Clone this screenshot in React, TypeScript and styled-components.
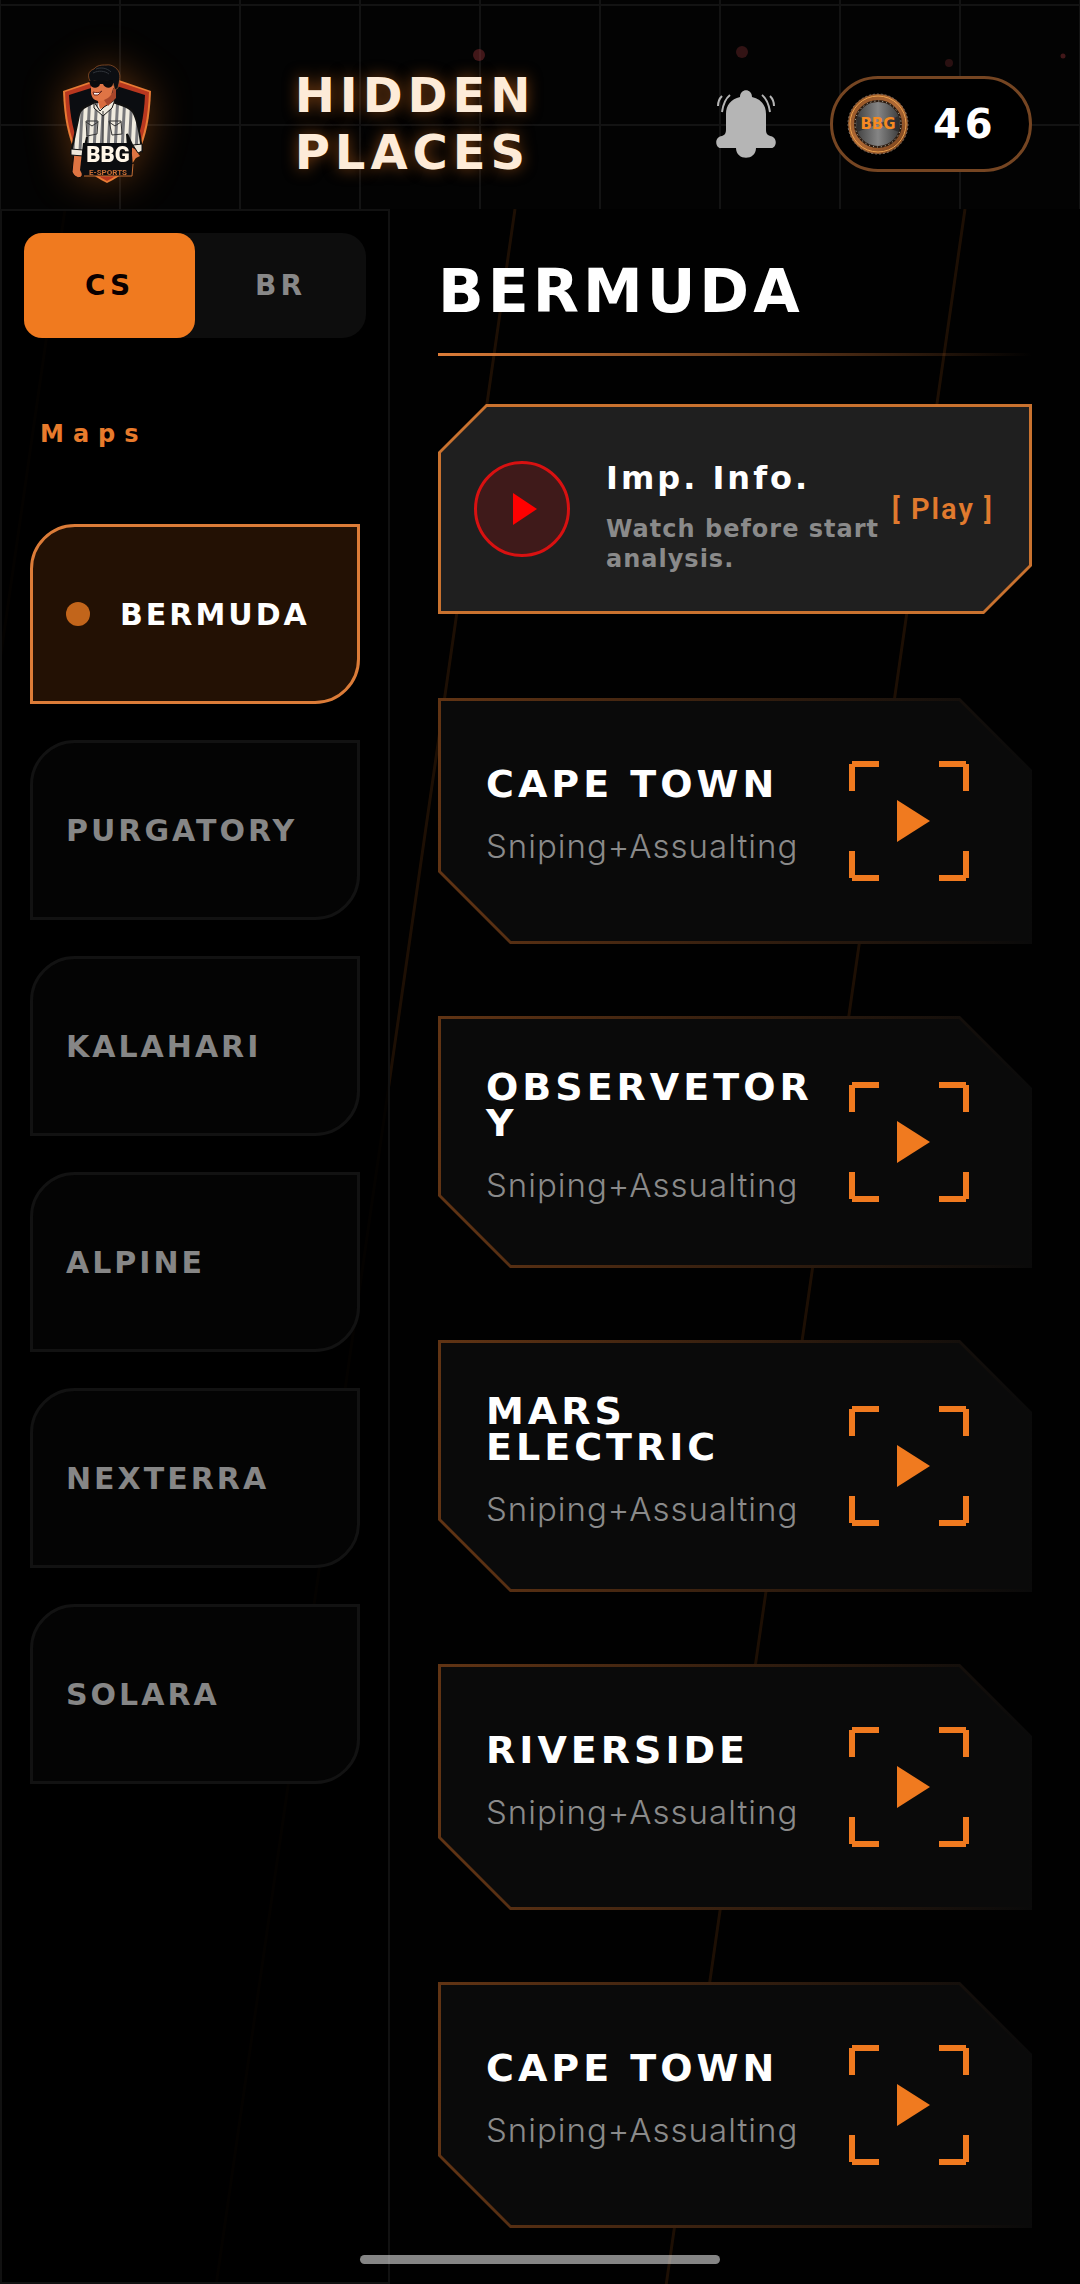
import React, { useState } from "react";
import styled, { createGlobalStyle } from "styled-components";

const display = `"DejaVu Sans", Verdana, sans-serif`;
const orange = "#f07a1f";

const GlobalStyle = createGlobalStyle`
  *, *::before, *::after { box-sizing: border-box; }
  body { margin: 0; background: #010101; color: #fff; font-family: ${display}; font-weight: 700; }
  button { border: 0; padding: 0; margin: 0; background: none; color: inherit; font: inherit; letter-spacing: inherit; text-align: left; cursor: pointer; }
  h1, h2, h3, p { margin: 0; }
`;

const Page = styled.div`
  position: relative;
  display: flex;
  flex-direction: column;
  min-height: 100vh;
`;

const Header = styled.header`
  position: relative;
  display: flex;
  align-items: center;
  height: 209px;
  padding: 38px 48px 0;
  background-color: #030303;
  background-image:
    linear-gradient(90deg, #131313 2px, transparent 2px),
    linear-gradient(#131313 2px, transparent 2px);
  background-size: 120px 120px;
  background-position: -1px 0, 0 4px;
`;

const Sparks = styled.svg`
  position: absolute;
  inset: 0;
  width: 100%;
  height: 100%;
  pointer-events: none;
`;

const LogoFrame = styled.div`
  display: grid;
  place-items: center;
  width: 118px;
  height: 120px;
  border-radius: 60px;
  filter: drop-shadow(0 0 20px rgba(240, 122, 31, 0.35));
`;

const TitleArea = styled.div`
  flex: 1;
  display: flex;
  justify-content: center;
`;

const AppTitle = styled.h1`
  width: min-content;
  font-size: 48px;
  line-height: 57px;
  letter-spacing: 5px;
  color: #fdebd8;
  text-shadow: 0 0 15px rgba(240, 122, 31, 0.5);
`;

const HeaderActions = styled.div`
  display: flex;
  align-items: center;
  gap: 54px;
  padding-left: 52px;
`;

const BellButton = styled.button`
  display: block;
  width: 60px;
  height: 68px;
  svg { display: block; }
`;

const CoinPill = styled.button`
  display: flex;
  align-items: center;
  gap: 24px;
  width: 202px;
  height: 96px;
  padding: 0 14px;
  border: 3px solid #754522;
  border-radius: 48px;
  background: #000;
  font-size: 40px;
  letter-spacing: 4px;
  svg { display: block; flex: none; letter-spacing: 0; }
`;

const Body = styled.div`
  position: relative;
  flex: 1;
  display: flex;
`;

const Streaks = styled.svg`
  position: absolute;
  inset: 0;
  width: 100%;
  height: 100%;
  pointer-events: none;
`;

const Sidebar = styled.aside`
  position: relative;
  flex: 0 0 390px;
  padding: 22px;
  border: 2px solid #111;
  background: rgba(0, 0, 0, 0.85);
`;

const ModeSwitch = styled.div`
  display: flex;
  height: 105px;
  border-radius: 24px;
  background: #0d0d0d;
`;

const ModeButton = styled.button<{ $active: boolean }>`
  flex: 1;
  border-radius: 18px;
  text-align: center;
  font-size: 28px;
  letter-spacing: 4px;
  background: ${(p) => (p.$active ? orange : "transparent")};
  color: ${(p) => (p.$active ? "#0a0000" : "#888")};
`;

const GroupLabel = styled.h2`
  margin: 80px 0 74px 16px;
  font-size: 24px;
  line-height: 32px;
  letter-spacing: 9px;
  color: #e87b2c;
`;

const MapList = styled.nav`
  display: flex;
  flex-direction: column;
  gap: 36px;
  padding: 0 6px;
`;

const MapButton = styled.button<{ $active: boolean }>`
  display: flex;
  align-items: center;
  gap: 30px;
  height: 180px;
  padding: 0 33px;
  border: 3px solid ${(p) => (p.$active ? "#dc7c38" : "#121212")};
  border-radius: 45px 0 45px 0;
  background: ${(p) => (p.$active ? "#231104" : "#040404")};
  color: ${(p) => (p.$active ? "#fff" : "#868686")};
  font-size: 30px;
  letter-spacing: 3px;
`;

const ActiveDot = styled.span`
  flex: none;
  width: 24px;
  height: 24px;
  border-radius: 12px;
  background: #c2651b;
`;

const Main = styled.main`
  position: relative;
  flex: 1;
  min-width: 0;
  padding: 50px 48px 56px;
`;

const MapTitle = styled.h2`
  font-size: 60px;
  line-height: 64px;
  letter-spacing: 4px;
`;

const Rule = styled.div`
  height: 3px;
  margin: 30px 0 48px;
  background: linear-gradient(90deg, #dc7c38, transparent);
`;

const InfoCard = styled.button`
  position: relative;
  display: flex;
  align-items: center;
  width: 100%;
  min-height: 210px;
  padding: 0 38px 0 36px;
  background: #c9722f;
  clip-path: polygon(48px 0, 100% 0, 100% calc(100% - 48px), calc(100% - 48px) 100%, 0 100%, 0 48px);
  &::before {
    content: "";
    position: absolute;
    inset: 3px;
    background: #1f1f1f;
    clip-path: polygon(46px 0, 100% 0, 100% calc(100% - 46px), calc(100% - 46px) 100%, 0 100%, 0 46px);
  }
  > * { position: relative; }
`;

const PlayCircle = styled.span`
  flex: none;
  display: grid;
  place-items: center;
  width: 96px;
  height: 96px;
  border: 3px solid #d81111;
  border-radius: 48px;
  background: #3f1a1a;
`;

const InfoText = styled.span`
  flex: 1;
  display: flex;
  flex-direction: column;
  gap: 16px;
  padding: 14px 0 0 36px;
`;

const InfoTitle = styled.span`
  font-size: 32px;
  line-height: 40px;
  letter-spacing: 3px;
`;

const InfoNote = styled.span`
  font-size: 24px;
  line-height: 30px;
  letter-spacing: 1px;
  color: #8a8a8a;
`;

const PlayTag = styled.span`
  flex: none;
  font-family: Roboto, sans-serif;
  font-weight: 600;
  font-size: 29px;
  letter-spacing: 2px;
  color: #e07a2e;
`;

const Places = styled.div`
  display: flex;
  flex-direction: column;
  gap: 72px;
  margin-top: 84px;
`;

const PlaceCard = styled.button`
  position: relative;
  display: flex;
  align-items: center;
  gap: 24px;
  width: 100%;
  min-height: 246px;
  padding: 53px 63px 53px 48px;
  background: linear-gradient(90deg, #613414, #0a0a0a);
  clip-path: polygon(0 0, calc(100% - 72px) 0, 100% 72px, 100% 100%, 72px 100%, 0 calc(100% - 72px));
  &::before {
    content: "";
    position: absolute;
    inset: 3px;
    background: #0a0a0a;
    clip-path: polygon(0 0, calc(100% - 70px) 0, 100% 70px, 100% 100%, 70px 100%, 0 calc(100% - 70px));
  }
  > * { position: relative; }
`;

const PlaceText = styled.span`
  flex: 1;
  min-width: 0;
  display: flex;
  flex-direction: column;
  gap: 24px;
  padding-bottom: 10px;
`;

const PlaceName = styled.span`
  font-size: 38px;
  line-height: 36px;
  letter-spacing: 4px;
  overflow-wrap: anywhere;
`;

const PlaceNote = styled.span`
  font-family: Inter, sans-serif;
  font-weight: 300;
  font-size: 33px;
  line-height: 40px;
  letter-spacing: 1px;
  color: #8a8a8a;
`;

const TargetIcon = styled.svg`
  flex: none;
  display: block;
`;

const HomeBar = styled.div`
  position: absolute;
  left: 50%;
  bottom: 20px;
  width: 360px;
  height: 9px;
  margin-left: -180px;
  border-radius: 5px;
  background: rgba(255, 255, 255, 0.52);
`;

function Logo() {
  return (
    <svg width="90" height="120" viewBox="0 0 90 120" role="img" aria-label="BBG E-Sports">
      <defs>
        <pattern id="stripes" width="7" height="10" patternUnits="userSpaceOnUse" patternTransform="rotate(3)">
          <rect width="7" height="10" fill="#f0ebdf" />
          <rect width="3" height="10" fill="#77777a" />
        </pattern>
      </defs>
      <path d="M45 12L89 27C88 55 84 72 77 88C70 103 60 112 45 119C30 112 20 103 13 88C6 72 2 55 1 27Z" fill="#e87b35" />
      <path d="M45 14L87 28C86 55 82 71 75 87C68 101 59 110 45 117C31 110 22 101 15 87C8 71 4 55 3 28Z" fill="#b8371f" />
      <path d="M45 19L83 31C82 54 78 70 72 84C66 96 57 104 45 110C33 104 24 96 18 84C12 70 8 54 7 31Z" fill="#0b0d11" />
      <path d="M12 88L10 108C13 114 18 115 20 112L23 88Z" fill="#de7442" stroke="#0a0a0a" />
      <path d="M70 82L78 92L70 96Z" fill="#de7442" />
      <path d="M33 38L25 42C18 45 17 49 16 56L9 89L21 91L25 73L24 84H66L65 70L71 83L80 87C78 70 76 56 71 48C67 42 61 42 51 38Z" fill="url(#stripes)" stroke="#101010" strokeWidth="2" />
      <path d="M9 85L21 86V92L9 91Z M71 81L80 80V87L76 89Z" fill="#eee7da" stroke="#101010" />
      <path d="M35 34L38 45L52 39L51 29Z" fill="#d96c3f" />
      <path d="M32 38L38 47L42 43L53 36L50 44L41 52L32 44Z" fill="#eee9dd" stroke="#101010" />
      <path d="M41 47V83M24 57H36L35 70L25 72ZM47 57H59L60 70L50 71Z" fill="none" stroke="#333" strokeWidth="1" />
      <path d="M24 58L30 62L36 58M47 58L53 62L59 58" fill="none" stroke="#333" strokeWidth="1" />
      <path d="M29 13V29C30 35 33 37 38 37C44 37 50 32 51 25L55 20V12Z" fill="#df7445" />
      <path d="M42 36C48 34 51 29 51 25L54 22V34L46 42Z" fill="#a8462b" />
      <path d="M28 17C24 9 29 6 32 5C35 1 40 1 44 1C50 0 55 4 57 8C59 13 57 18 56 24L53 26L51 19L46 17L38 18L32 17L29 19Z" fill="#0c0e12" stroke="#b5642f" strokeWidth="0.6" />
      <path d="M34 5C39 3 45 4 49 8M31 9C37 6 43 7 47 10" stroke="#30343a" fill="none" />
      <path d="M27 17L51 16V20C50 25 43 25 41 20H38C37 25 29 25 28 20Z" fill="#0a0a0c" />
      <path d="M31 28C35 29 37 29 40 27L36 31H32Z" fill="#fff" stroke="#6b2418" strokeWidth="1" />
      <path d="M21 79H69L71 103V112H21L18 106Z" fill="#0b0c0f" />
      <path d="M22 112H70L71 100" fill="none" stroke="#c66e33" strokeWidth="1" />
      <text x="46" y="98" textAnchor="middle" fontFamily="Roboto, sans-serif" fontWeight="900" fontSize="22" fill="#fff6e8">BBG</text>
      <text x="46" y="111" textAnchor="middle" fontFamily="Roboto, sans-serif" fontWeight="700" fontSize="8" fill="#c96f35">E-SPORTS</text>
    </svg>
  );
}

function Bell() {
  return (
    <svg width="60" height="68" viewBox="0 0 60 68" fill="#b5b5b5" aria-hidden="true">
      <path d="M24 7C24 -2 36 -2 36 7C45 9 50 15 50 24V40C50 44 52 45 54 46C62 47 61 58 55 58H40C40 71 20 71 20 58H5C-1 58 -2 47 6 46C9 45 10 43 10 39V24C10 15 15 9 24 7Z" />
      <path d="M6 6C3 9 2 12 2 16M14 5C9 9 7 15 6 22M54 6C57 9 58 12 58 16M46 5C51 9 53 15 54 22" fill="none" stroke="#b5b5b5" strokeWidth="2" />
    </svg>
  );
}

function Coin() {
  return (
    <svg width="62" height="64" viewBox="0 0 62 64" aria-hidden="true">
      <defs>
        <linearGradient id="rim" x1="0" y1="0" x2="1" y2="1">
          <stop offset="0" stopColor="#8c5024" />
          <stop offset="0.5" stopColor="#b06a36" />
          <stop offset="1" stopColor="#6e3a17" />
        </linearGradient>
        <linearGradient id="steel" x1="0" y1="0" x2="1" y2="0">
          <stop offset="0" stopColor="#3c3c3c" />
          <stop offset="0.5" stopColor="#858585" />
          <stop offset="1" stopColor="#383838" />
        </linearGradient>
      </defs>
      <circle cx="31" cy="32" r="30" fill="url(#rim)" stroke="#7d6d5c" strokeDasharray="2 2" />
      <circle cx="31" cy="32" r="28" fill="none" stroke="#e9a04c" strokeWidth="1" />
      <circle cx="31" cy="32" r="23" fill="url(#steel)" stroke="#2c1b10" strokeWidth="2" />
      <path d="M31 32L10 24V40ZM31 32L52 24V40Z" fill="#222" opacity="0.6" />
      <circle cx="31" cy="32" r="23" fill="none" stroke="#ccb" strokeDasharray="1 3" />
      <text x="31" y="37" textAnchor="middle" fontFamily="DejaVu Sans, sans-serif" fontWeight="700" fontSize="15" fill="#f58a22">BBG</text>
    </svg>
  );
}

function Target() {
  return (
    <TargetIcon width="120" height="120" viewBox="0 0 120 120" aria-hidden="true">
      <path
        d="M3 3V30M3 3H30M90 3H117M117 3V30M3 90V117M3 117H30M117 90V117M90 117H117"
        stroke={orange}
        strokeWidth="6"
      />
      <path d="M48 39L81 60L48 81Z" fill={orange} />
    </TargetIcon>
  );
}

const maps = ["BERMUDA", "PURGATORY", "KALAHARI", "ALPINE", "NEXTERRA", "SOLARA"];
const places = ["CAPE TOWN", "OBSERVETORY", "MARS ELECTRIC", "RIVERSIDE", "CAPE TOWN"];

export default function App() {
  const [mode, setMode] = useState("CS");
  const [map, setMap] = useState("BERMUDA");

  return (
    <Page>
      <GlobalStyle />
      <Header>
        <Sparks aria-hidden="true" fill="#a0383c">
          <circle cx="479" cy="55" r="6" opacity="0.4" />
          <circle cx="742" cy="52" r="6" opacity="0.3" />
          <circle cx="949" cy="63" r="4" opacity="0.25" />
          <circle cx="1063" cy="56" r="2.5" opacity="0.4" />
        </Sparks>
        <LogoFrame>
          <Logo />
        </LogoFrame>
        <TitleArea>
          <AppTitle>HIDDEN PLACES</AppTitle>
        </TitleArea>
        <HeaderActions>
          <BellButton aria-label="Notifications">
            <Bell />
          </BellButton>
          <CoinPill>
            <Coin />
            46
          </CoinPill>
        </HeaderActions>
      </Header>
      <Body>
        <Streaks aria-hidden="true" stroke={orange} strokeOpacity="0.12" strokeWidth="3">
          <path d="M65 0L-235 2084M515 0L215 2084M965 0L665 2084M1415 0L1115 2084" />
        </Streaks>
        <Sidebar>
          <ModeSwitch>
            {["CS", "BR"].map((m) => (
              <ModeButton key={m} $active={m === mode} aria-pressed={m === mode} onClick={() => setMode(m)}>
                {m}
              </ModeButton>
            ))}
          </ModeSwitch>
          <GroupLabel>Maps</GroupLabel>
          <MapList>
            {maps.map((m) => (
              <MapButton key={m} $active={m === map} onClick={() => setMap(m)}>
                {m === map && <ActiveDot />}
                {m}
              </MapButton>
            ))}
          </MapList>
        </Sidebar>
        <Main>
          <MapTitle>{map}</MapTitle>
          <Rule />
          <InfoCard>
            <PlayCircle>
              <svg width="90" height="90" viewBox="3 3 90 90" aria-hidden="true">
                <path d="M39 32L63 48L39 64Z" fill="#f00" />
              </svg>
            </PlayCircle>
            <InfoText>
              <InfoTitle>Imp. Info.</InfoTitle>
              <InfoNote>Watch before start analysis.</InfoNote>
            </InfoText>
            <PlayTag>[ Play ]</PlayTag>
          </InfoCard>
          <Places>
            {places.map((name, i) => (
              <PlaceCard key={i}>
                <PlaceText>
                  <PlaceName>{name}</PlaceName>
                  <PlaceNote>Sniping+Assualting</PlaceNote>
                </PlaceText>
                <Target />
              </PlaceCard>
            ))}
          </Places>
        </Main>
      </Body>
      <HomeBar />
    </Page>
  );
}
